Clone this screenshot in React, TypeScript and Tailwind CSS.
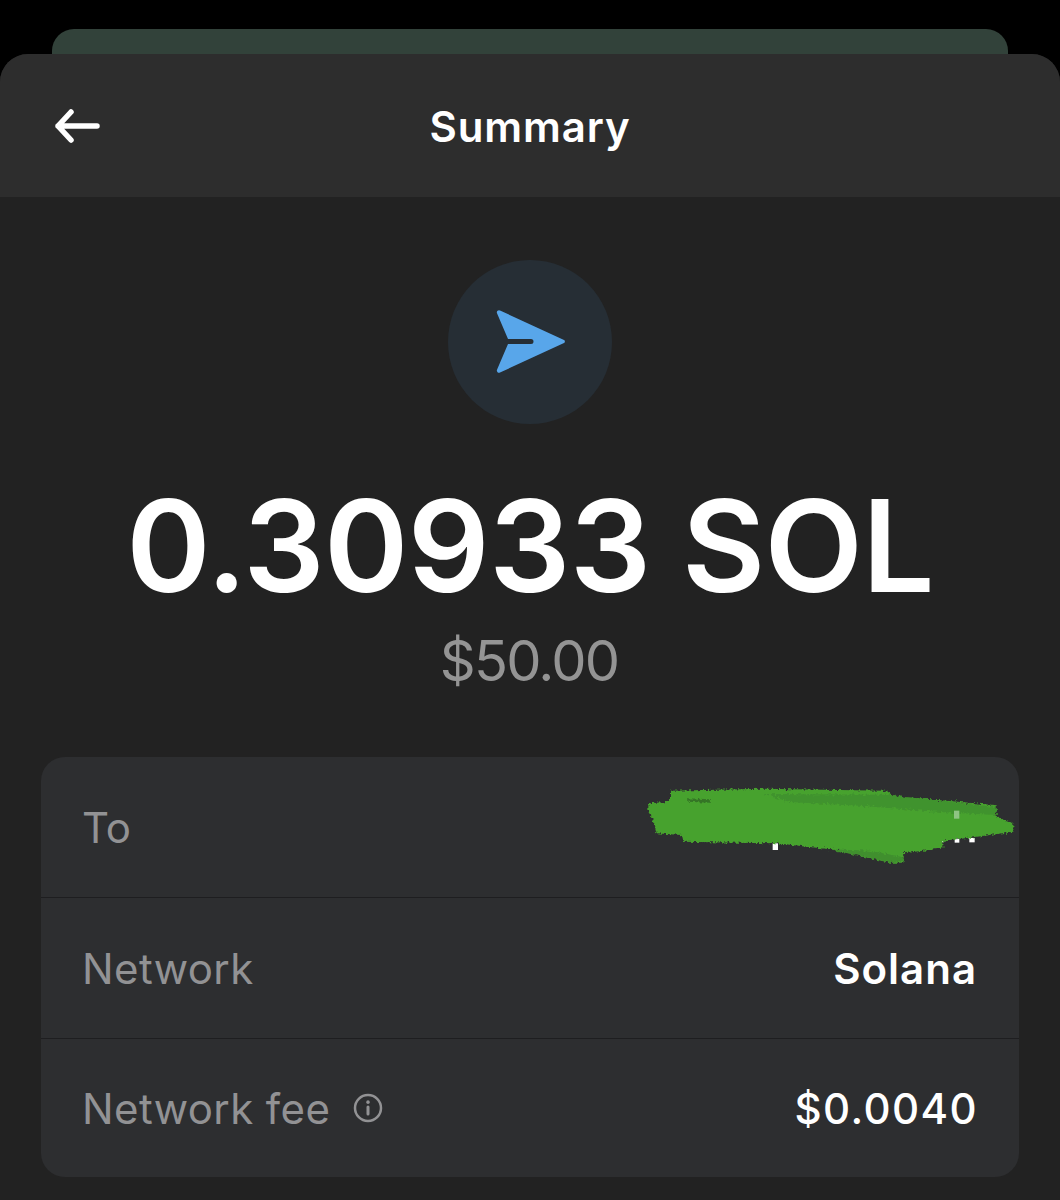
export default function App() {
  const font = { fontFamily: 'Inter, "Liberation Sans", sans-serif' };
  return (
    <div style={font} className="h-[1200px] w-[1060px] overflow-hidden bg-black pt-[29px] flex flex-col">
      <div className="mx-[52px] h-[25px] shrink-0 rounded-t-[22px] bg-[#32423a]" />
      <div className="flex-1 rounded-t-[28px] bg-[#222222] flex flex-col overflow-hidden">
        <div className="h-[143px] shrink-0 bg-[#2d2d2d] grid grid-cols-[1fr_auto_1fr] items-center pl-[53px]">
          <svg width="48" height="38" viewBox="0 0 48 38" fill="none" stroke="white" strokeWidth="5.5" strokeLinecap="round" strokeLinejoin="round">
            <path d="M44 19H5M18 5 5 19l13 14" />
          </svg>
          <div className="text-[42px] font-semibold tracking-[0.9px] text-white leading-none -ml-[53px] pt-[2px]">Summary</div>
          <div />
        </div>
        <div className="flex flex-col items-center pt-[63px]">
          <div className="size-[164px] rounded-full bg-[#262e35] flex items-center justify-center">
            <svg width="72" height="70" viewBox="0 0 72 70" fill="none">
              <path d="M5 4 69 33.5a1.7 1.7 0 0 1 0 3L5 66a2.2 2.2 0 0 1-3-2.8L13 37.5h23a2.5 2.5 0 0 0 0-5H13L2 6.8A2.2 2.2 0 0 1 5 4Z" fill="#58a6ea" transform="translate(1 -.5)" />
            </svg>
          </div>
          <div className="mt-[58px] text-[128px] font-semibold leading-[128px] tracking-[-0.7px] text-white whitespace-nowrap">0.30933 SOL</div>
          <div className="mt-[19px] text-[56px] leading-[64px] tracking-[-1.8px] text-[#949494] pr-[2px]">$50.00</div>
        </div>
        <div className="mx-[41px] mt-[64px] rounded-[24px] bg-[#2d2e30] text-[42px] flex flex-col">
          <div className="h-[140px] flex items-center justify-between pl-[41px] relative">
            <span className="text-[#929294]">To</span>
            <svg className="absolute left-[589px] top-[13px]" width="400" height="110" viewBox="0 0 1200 330" fill="none">
              <defs>
                <filter id="rough" x="-5%" y="-20%" width="110%" height="140%">
                  <feTurbulence type="fractalNoise" baseFrequency="0.12" numOctaves="3" seed="4" />
                  <feDisplacementMap in="SourceGraphic" scale="16" xChannelSelector="R" yChannelSelector="G" />
                </filter>
              </defs>
              <rect x="428" y="220" width="16" height="20" fill="#ffffff" />
              <rect x="974" y="206" width="14" height="12" fill="#ffffff" />
              <rect x="1018" y="204" width="16" height="13" fill="#ffffff" />
              <rect x="930" y="204" width="11" height="13" fill="#d8ecd0" />
              <g filter="url(#rough)">
                <path d="M120 62 400 56 770 62 790 78 1100 106 1100 140 1150 160 1150 185 1030 202 940 212 940 235 822 250 820 278 780 278 600 238 440 220 160 215 155 195 80 190 70 150 55 125 55 100 120 95Z" fill="#47a22e" />
                <path d="M170 85 240 88 240 98 175 95Z" fill="#2f6a25" opacity="0.8" />
                <path d="M400 72 780 74 1100 112 1100 135 960 128 700 108 480 96Z" fill="#3a7c2d" opacity="0.4" />
                <path d="M600 238 720 242 820 262 820 272 780 276Z" fill="#3a7c2d" opacity="0.5" />
              </g>
              <rect x="972" y="122" width="16" height="24" fill="#8fc483" />
            </svg>
          </div>
          <div className="h-px bg-[#1e1e20]" />
          <div className="h-[140px] flex items-center justify-between pl-[41px] pr-[42px]">
            <span className="text-[#929294] tracking-[0.4px]">Network</span>
            <span className="text-white font-semibold tracking-[1px]">Solana</span>
          </div>
          <div className="h-px bg-[#1e1e20]" />
          <div className="h-[138px] flex items-center justify-between pl-[41px] pr-[41px]">
            <span className="flex items-center gap-[23px] text-[#929294] tracking-[0.4px]">
              Network fee
              <svg width="30" height="30" viewBox="0 0 30 30" fill="none" stroke="#929294" strokeWidth="2.5" strokeLinecap="round">
                <circle cx="15" cy="15" r="13" />
                <path d="M15 14v7" strokeWidth="3" />
                <path d="M15 9v.3" strokeWidth="3.5" />
              </svg>
            </span>
            <span className="text-white font-medium tracking-[1.4px]">$0.0040</span>
          </div>
        </div>
      </div>
    </div>
  );
}
